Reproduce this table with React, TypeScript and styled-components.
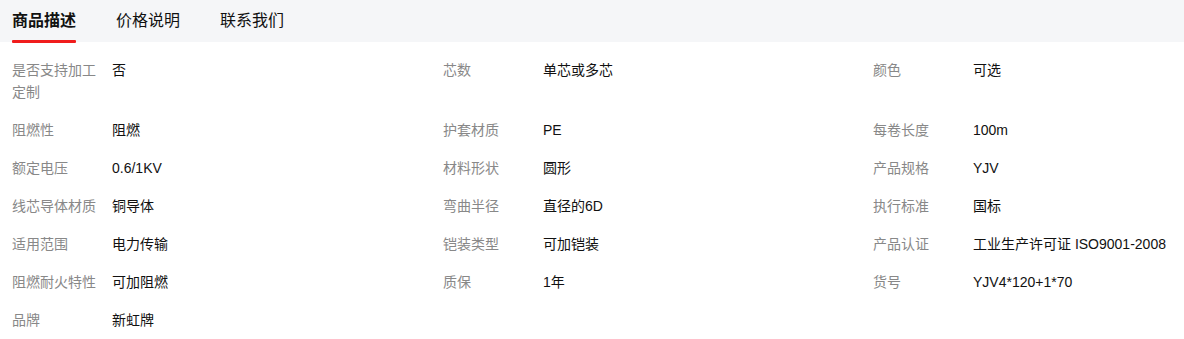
import React from 'react';
import styled, { createGlobalStyle } from 'styled-components';

const GlobalStyle = createGlobalStyle`
  body {
    margin: 0;
    background: #fff;
    font-family: "Liberation Sans", Arial, "Noto Sans CJK SC", sans-serif;
  }
`;

interface Attr {
  label: string;
  value: string;
}

const attrs: Attr[] = [
  { label: '是否支持加工定制', value: '否' },
  { label: '芯数', value: '单芯或多芯' },
  { label: '颜色', value: '可选' },
  { label: '阻燃性', value: '阻燃' },
  { label: '护套材质', value: 'PE' },
  { label: '每卷长度', value: '100m' },
  { label: '额定电压', value: '0.6/1KV' },
  { label: '材料形状', value: '圆形' },
  { label: '产品规格', value: 'YJV' },
  { label: '线芯导体材质', value: '铜导体' },
  { label: '弯曲半径', value: '直径的6D' },
  { label: '执行标准', value: '国标' },
  { label: '适用范围', value: '电力传输' },
  { label: '铠装类型', value: '可加铠装' },
  { label: '产品认证', value: '工业生产许可证 ISO9001-2008' },
  { label: '阻燃耐火特性', value: '可加阻燃' },
  { label: '质保', value: '1年' },
  { label: '货号', value: 'YJV4*120+1*70' },
  { label: '品牌', value: '新虹牌' },
];

const tabs = ['商品描述', '价格说明', '联系我们'];

const Wrapper = styled.div`
  width: 1184px;
  height: 339px;
  overflow: hidden;
`;

const TabBar = styled.nav`
  display: flex;
  gap: 40px;
  height: 42px;
  padding: 0 12px;
  background: #f5f6f8;
`;

const Tab = styled.div<{ $active?: boolean }>`
  position: relative;
  display: flex;
  align-items: center;
  height: 42px;
  padding-bottom: 4px;
  box-sizing: border-box;
  font-size: 16px;
  color: #111;
  font-weight: ${({ $active }) => ($active ? 700 : 400)};

  &::after {
    content: '';
    display: ${({ $active }) => ($active ? 'block' : 'none')};
    position: absolute;
    left: 0;
    right: 0;
    bottom: -1px;
    height: 3px;
    border-radius: 1px;
    background: #f01c1c;
  }
`;

const Grid = styled.section`
  display: grid;
  grid-template-columns: 431px 430px 1fr;
  padding: 9px 12px 0;
`;

const Item = styled.div`
  display: flex;
  align-items: flex-start;
  padding: 8px 0;
  font-size: 14px;
  line-height: 22px;
`;

const Label = styled.span`
  width: 88px;
  margin-right: 12px;
  flex-shrink: 0;
  color: #888;
`;

const Value = styled.span`
  color: #111;
`;

const App: React.FC = () => {
  return (
    <Wrapper>
      <GlobalStyle />
      <TabBar>
        {tabs.map((t, i) => (
          <Tab key={t} $active={i === 0}>
            {t}
          </Tab>
        ))}
      </TabBar>
      <Grid>
        {attrs.map((a) => (
          <Item key={a.label}>
            <Label>{a.label}</Label>
            <Value>{a.value}</Value>
          </Item>
        ))}
      </Grid>
    </Wrapper>
  );
};

export default App;
